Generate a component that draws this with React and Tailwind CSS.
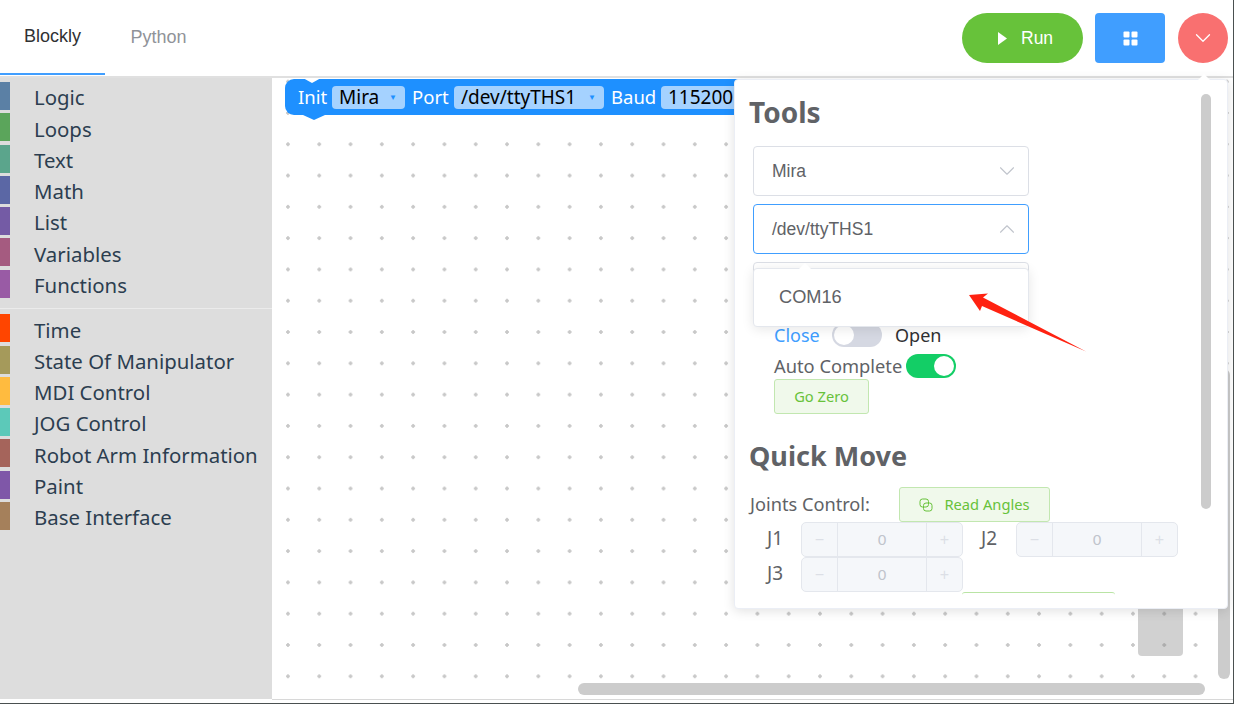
import React from "react";
import { ChevronDown, ChevronUp } from "lucide-react";

const groupOne = [
  ["Logic", "bg-[#5b80a5]"],
  ["Loops", "bg-[#5ba55b]"],
  ["Text", "bg-[#5ba58c]"],
  ["Math", "bg-[#5b67a5]"],
  ["List", "bg-[#745ba5]"],
  ["Variables", "bg-[#a55b80]"],
  ["Functions", "bg-[#995ba5]"],
];

const groupTwo = [
  ["Time", "bg-[#ff4500]"],
  ["State Of Manipulator", "bg-[#a59a5b]"],
  ["MDI Control", "bg-[#ffbb3f]"],
  ["JOG Control", "bg-[#5cc9b9]"],
  ["Robot Arm Information", "bg-[#a5645b]"],
  ["Paint", "bg-[#7f57a8]"],
  ["Base Interface", "bg-[#a5805b]"],
];

function Category({ label, color }) {
  return (
    <div className="flex h-[31.25px] items-center">
      <span className={`h-[28px] w-[10px] ${color}`}></span>
      <span className="ml-[24px] pt-[3px] text-[20.4px] leading-none whitespace-nowrap text-[#2c3e50]">{label}</span>
    </div>
  );
}

function Field({ label, width, arrow = true }) {
  return (
    <span className={`flex h-[23px] items-center rounded-[4px] bg-[#a5d2ff] pl-[7px] text-[19px] text-black ${width}`}>
      <span className="leading-none">{label}</span>
      {arrow && <span className="mr-[8px] ml-auto text-[8px] leading-none text-[#1e90ff]">▼</span>}
    </span>
  );
}

function SelectBox({ value, open = false }) {
  return (
    <div className={`flex h-[50px] w-[276px] items-center justify-between rounded-[4px] border bg-white pr-[8px] pl-[18px] font-['Liberation_Sans',sans-serif] text-[17.5px] text-[#606266] ${open ? "border-[#409eff]" : "border-[#dcdfe6]"}`}>
      <span>{value}</span>
      {open ? <ChevronUp size={26} strokeWidth={1} className="text-[#c0c4cc]" /> : <ChevronDown size={26} strokeWidth={1} className="text-[#c0c4cc]" />}
    </div>
  );
}

function Toggle({ on }) {
  return (
    <span className={`flex h-[24px] w-[50px] items-center rounded-full p-[2px] ${on ? "justify-end bg-[#13ce66]" : "justify-start bg-[#d5d8e2]"}`}>
      <span className="h-[20px] w-[20px] rounded-full bg-white"></span>
    </span>
  );
}

function NumberBox() {
  return (
    <div className="flex h-[35px] w-[162px] items-center rounded-[5px] border border-[#e4e7ed] bg-[#f5f7fa] font-['Liberation_Sans',sans-serif] text-[#c0c4cc]">
      <span className="flex h-full w-[36px] items-center justify-center border-r border-[#e4e7ed] text-[16px] text-[#dcdfe6]">−</span>
      <span className="flex-1 text-center text-[15.5px]">0</span>
      <span className="flex h-full w-[36px] items-center justify-center border-l border-[#e4e7ed] text-[16px] text-[#dcdfe6]">+</span>
    </div>
  );
}

function JointLabel({ width, children }) {
  return <span className={`${width} pb-[2px] pl-[18px] text-[19px] text-[#606266]`}>{children}</span>;
}

export default function App() {
  return (
    <div className="relative flex h-screen w-full flex-col overflow-hidden border-r border-b border-[#4a5050] bg-white font-['Noto_Sans',sans-serif]">
      <header className="flex h-[78px] shrink-0 items-center justify-between border-b-2 border-[#e0e0e0] pr-[5px]">
        <div className="flex h-full font-['Liberation_Sans',sans-serif] text-[18px]">
          <div className="flex h-[75px] w-[105px] items-center justify-center border-b-2 border-[#409eff] text-[#303133]">Blockly</div>
          <div className="flex h-[75px] w-[107px] items-center justify-center text-[#909399]">Python</div>
        </div>
        <div className="flex items-center">
          <button className="flex h-[50px] w-[121px] items-center rounded-full bg-[#67c23a] pl-[36px] font-['Liberation_Sans',sans-serif] text-[17.5px] text-white">
            <svg width="9" height="13" viewBox="0 0 9 13" className="mr-[14px]">
              <polygon points="0,0 9,6.5 0,13" fill="white" />
            </svg>
            Run
          </button>
          <button className="ml-[12px] flex h-[50px] w-[70px] items-center justify-center rounded-[4px] bg-[#409eff]">
            <svg width="15" height="15" viewBox="0 0 15 15" fill="white">
              <rect x="0.5" y="0.5" width="6" height="6" rx="1" />
              <rect x="8.5" y="0.5" width="6" height="6" rx="1" />
              <rect x="0.5" y="8.5" width="6" height="6" rx="1" />
              <rect x="8.5" y="8.5" width="6" height="6" rx="1" />
            </svg>
          </button>
          <button className="ml-[13px] flex h-[50px] w-[50px] items-center justify-center rounded-full bg-[#f97070]">
            <ChevronDown size={26} strokeWidth={1.2} className="text-white" />
          </button>
        </div>
      </header>

      <main className="flex flex-1">
        <aside className="h-[621px] w-[272px] shrink-0 bg-[#dddddd] pt-[2.5px]">
          {groupOne.map(([label, color]) => (
            <Category key={label} label={label} color={color} />
          ))}
          <div className="mt-[8.8px] mb-[3.6px] h-px bg-[#ebebeb]"></div>
          {groupTwo.map(([label, color]) => (
            <Category key={label} label={label} color={color} />
          ))}
        </aside>

        {/* workspace canvas */}
        <section className="relative h-[622px] flex-1 border-b border-[#d8d8d8] bg-[radial-gradient(circle,#c8c8c8_1.5px,transparent_2px)] bg-[size:31.3px_31.3px] bg-[position:0.3px_-12px]">
          <div className="absolute top-[1px] left-[13px] flex h-[36px] w-[480px] items-center rounded-[9px] bg-[#1e90ff] pl-[13px] text-[18.5px] text-white">
            <span className="absolute -top-px left-[18px] h-0 w-0 border-x-[9px] border-t-[5px] border-x-transparent border-t-white"></span>
            <span className="absolute -bottom-[5px] left-[18px] h-0 w-0 border-x-[11px] border-t-[5px] border-x-transparent border-t-[#1e90ff]"></span>
            <span className="w-[34px]">Init</span>
            <Field label="Mira" width="w-[73px]" />
            <span className="ml-[7px] w-[42px]">Port</span>
            <Field label="/dev/ttyTHS1" width="w-[150px]" />
            <span className="ml-[7px] w-[50px]">Baud</span>
            <Field label="115200" width="w-[90px]" arrow={false} />
          </div>

          {/* trash shadow and scrollbars */}
          <div className="absolute top-[479px] left-[866px] h-[99px] w-[45px] rounded-[4px] bg-[#7a7a7a]/35"></div>
          <div className="absolute top-[291px] left-[946px] h-[310px] w-[12px] rounded-full bg-[#cccccc]"></div>
          <div className="absolute top-[605px] left-[306px] h-[12px] w-[627px] rounded-full bg-[#cccccc]"></div>
        </section>
      </main>

      {/* settings popover */}
      <div className="absolute top-[79px] left-[734px] h-[530px] w-[494px] rounded-[4px] border border-[#ebeef5] bg-white shadow-[0_2px_12px_rgba(0,0,0,0.12)]">
        <span className="absolute -top-[6px] right-[17px] h-0 w-0 border-x-[6px] border-b-[6px] border-x-transparent border-b-white"></span>
        <div className="absolute top-[14px] right-[16px] h-[415px] w-[10px] rounded-full bg-[#cccccc]"></div>

        <div className="h-full overflow-hidden pl-[14px]">
          <h3 className="mt-[13px] text-[28px] leading-[38px] font-bold text-[#606266]">Tools</h3>
          <div className="mt-[15px] ml-[4px] flex flex-col gap-[8px]">
            <SelectBox value="Mira" />
            <SelectBox value="/dev/ttyTHS1" open />
            <SelectBox value="" />
          </div>

          <div className="mt-[11px] ml-[25px] flex h-[24px] items-center text-[18px] text-[#606266]">
            <span className="w-[58px] text-[#409eff]">Close</span>
            <Toggle on={false} />
            <span className="ml-[13px] text-[#303133]">Open</span>
          </div>
          <div className="mt-[7px] ml-[25px] flex h-[24px] items-center text-[18.3px] text-[#606266]">
            <span className="w-[132px] whitespace-nowrap">Auto Complete</span>
            <Toggle on />
          </div>
          <button className="mt-[1px] ml-[25px] flex h-[35px] w-[95px] items-center justify-center rounded-[3px] border border-[#c2e7b0] bg-[#f0f9eb] text-[14.7px] text-[#67c23a]">Go Zero</button>

          <h3 className="mt-[23px] text-[27px] leading-[38px] font-bold text-[#606266]">Quick Move</h3>
          <div className="mt-[12px] flex h-[35px] items-center">
            <span className="w-[150px] pl-px text-[18.2px] text-[#606266]">Joints Control:</span>
            <button className="flex h-[35px] w-[151px] items-center justify-center gap-[11px] rounded-[3px] border border-[#c2e7b0] bg-[#f0f9eb] text-[14.7px] text-[#67c23a]">
              <svg width="14" height="14" viewBox="0 0 14 14" fill="none" stroke="currentColor" strokeWidth="1">
                <rect x="1" y="1" width="8.5" height="8" rx="2.5" />
                <rect x="4.5" y="5" width="8.5" height="8" rx="2.5" />
              </svg>
              Read Angles
            </button>
          </div>
          <div className="flex h-[35px] items-center">
            <JointLabel width="w-[52px]">J1</JointLabel>
            <NumberBox />
            <JointLabel width="w-[53px]">J2</JointLabel>
            <NumberBox />
          </div>
          <div className="flex h-[35px] items-center">
            <JointLabel width="w-[52px]">J3</JointLabel>
            <NumberBox />
          </div>
          <div className="ml-[213px] h-[8px] w-[153px] rounded-t-[3px] border-t border-[#b9e4a4]"></div>
        </div>

        {/* open select options */}
        <div className="absolute top-[188px] left-[18px] flex h-[59px] w-[276px] items-center rounded-[4px] border border-[#e4e7ed] bg-white pl-[25px] font-['Liberation_Sans',sans-serif] text-[18.2px] text-[#606266] shadow-[0_2px_12px_rgba(0,0,0,0.1)]">
          <span className="absolute -top-[6px] left-[45px] h-0 w-0 border-x-[6px] border-b-[6px] border-x-transparent border-b-white"></span>
          COM16
        </div>
      </div>

      {/* red annotation arrow */}
      <svg className="absolute top-[290px] left-[965px]" width="125" height="65" viewBox="0 0 125 65">
        <polygon points="4,5 23,3.5 18,7.5 121,61.5 17,16 15,21" fill="#ff2211" />
      </svg>
    </div>
  );
}
